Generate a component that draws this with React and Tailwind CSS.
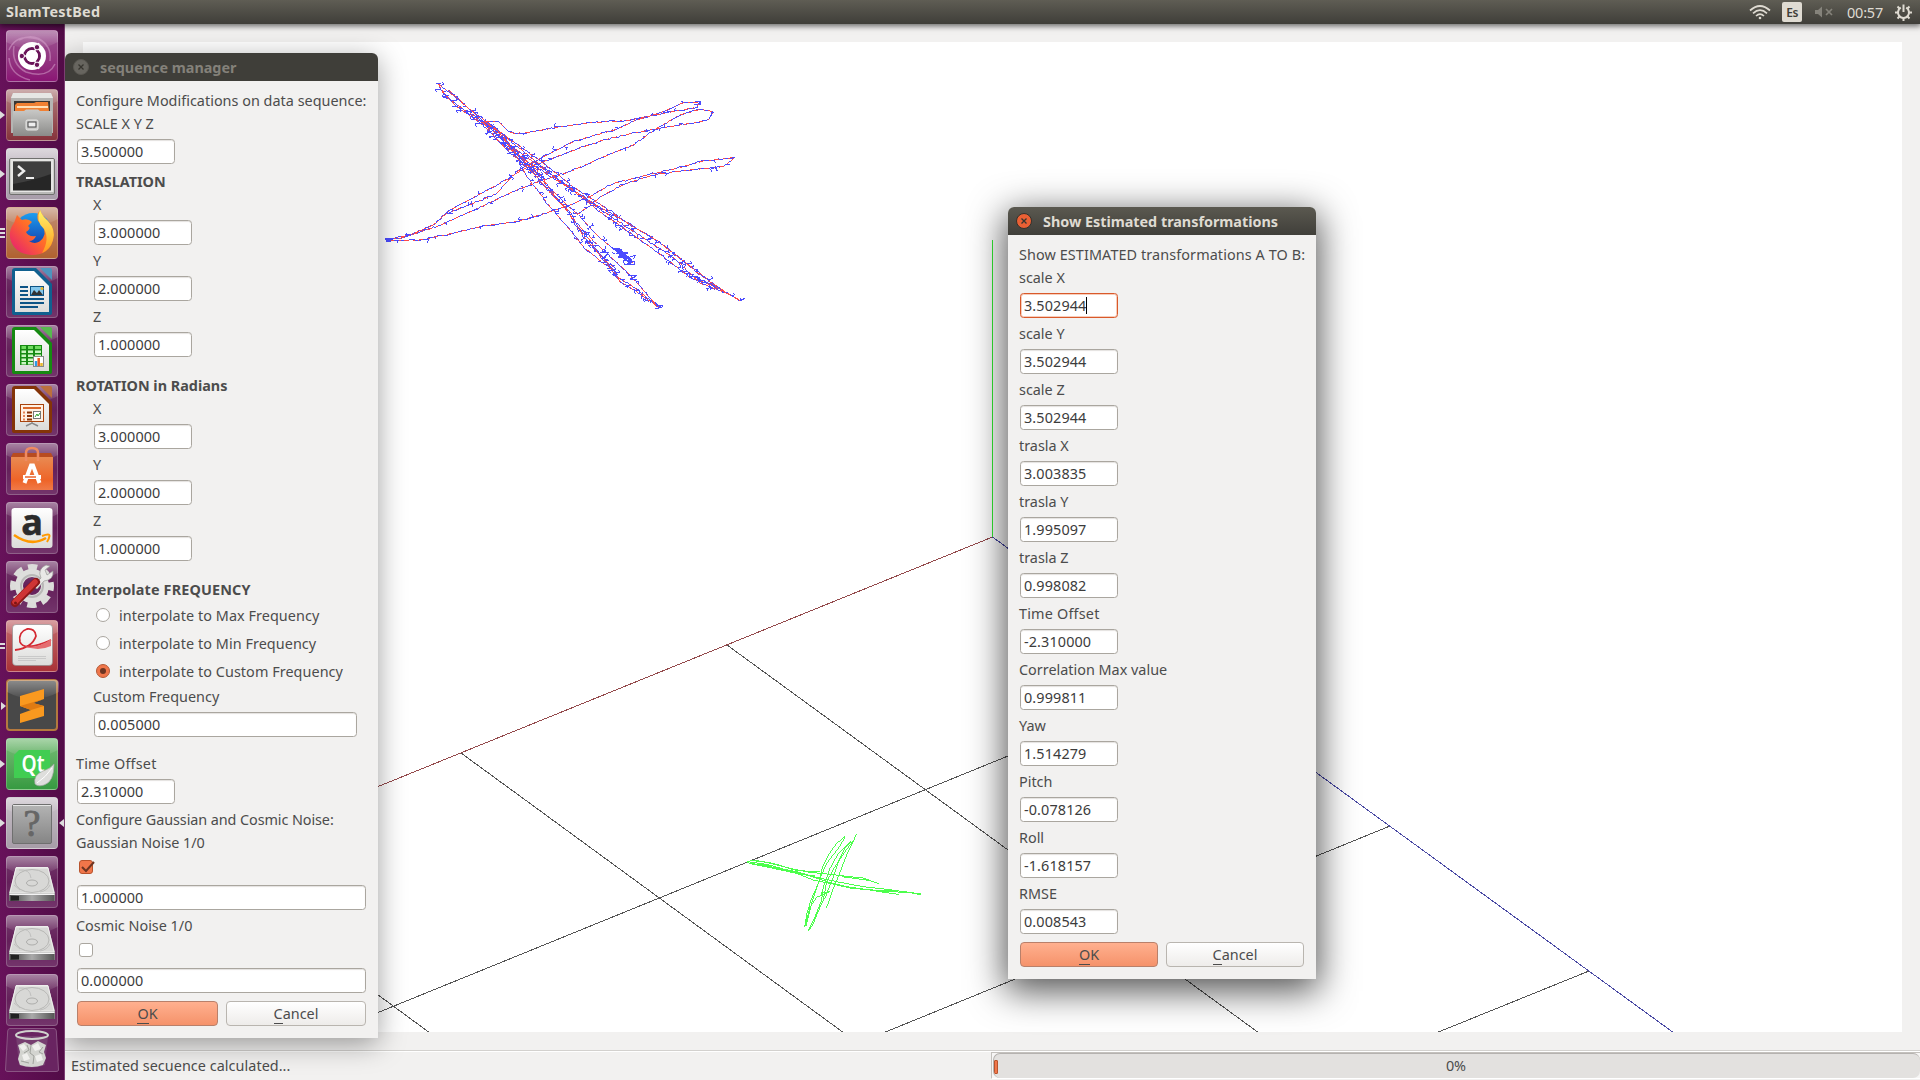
import React from "react";

/* ---------- trajectory helpers ---------- */

function makeRandom(seed) {
  let s = seed;
  return () => {
    s = (s * 1664525 + 1013904223) % 4294967296;
    return s / 4294967296;
  };
}

function sample(points, step) {
  const out = [];
  for (let i = 0; i < points.length - 1; i++) {
    const [x1, y1] = points[i];
    const [x2, y2] = points[i + 1];
    const n = Math.max(1, Math.round(Math.hypot(x2 - x1, y2 - y1) / step));
    for (let k = 0; k < n; k++) out.push([x1 + ((x2 - x1) * k) / n, y1 + ((y2 - y1) * k) / n]);
  }
  out.push(points[points.length - 1]);
  return out;
}

function noisyPath(points, seed, rate) {
  const rnd = makeRandom(seed);
  let d = "";
  sample(points, 9).forEach(([x, y], i) => {
    const jx = x + (rnd() - 0.5) * 5;
    const jy = y + (rnd() - 0.5) * 4;
    d += (i ? "L" : "M") + jx.toFixed(1) + " " + jy.toFixed(1);
    if (rnd() < rate) {
      const sx = (rnd() < 0.5 && x > 90 ? -1 : 1) * (5 + rnd() * 11);
      const sy = (rnd() - 0.5) * 20;
      d += `l${sx.toFixed(1)} ${(sy * 0.2).toFixed(1)}l${(-sx * 0.3).toFixed(1)} ${sy.toFixed(1)}M${jx.toFixed(1)} ${jy.toFixed(1)}`;
    }
  });
  return d;
}

const line = (pts) => "M" + pts.map((p) => p.join(" ")).join("L");

const TRACKS = [
  { r: 0.35, p: [[205, 42], [255, 80], [330, 145], [400, 195], [470, 252], [560, 325], [650, 388], [740, 440], [850, 505], [970, 595], [1050, 658], [1110, 692]] },
  { r: 0.35, p: [[205, 42], [222, 75], [290, 125], [360, 175], [440, 240], [510, 290], [600, 355], [690, 425], [790, 495], [880, 560], [960, 622], [1035, 650], [1105, 690]] },
  { r: 0.35, p: [[215, 60], [260, 110], [330, 158], [400, 225], [470, 272], [545, 322], [640, 380], [730, 445], [830, 510], [920, 570], [990, 640], [1060, 665]] },
  { r: 0.15, p: [[235, 60], [300, 118], [355, 160], [430, 215], [520, 280], [610, 350], [700, 410], [790, 470], [860, 510], [930, 565], [990, 615], [1080, 675]] },
  { r: 0.4, p: [[340, 155], [385, 215], [430, 255], [500, 320], [550, 380], [600, 425], [640, 500], [700, 565], [740, 620], [790, 650], [840, 690], [868, 712]] },
  { r: 0.3, p: [[350, 160], [390, 190], [440, 260], [470, 320], [540, 410], [600, 480], [640, 530], [700, 580], [730, 600], [750, 635], [800, 665], [865, 712]] },
  { r: 0.3, p: [[370, 170], [420, 230], [480, 290], [530, 345], [580, 395], [630, 440], [680, 495], [740, 545], [790, 580]] },
  { r: 0.45, p: [[400, 200], [440, 245], [490, 310], [545, 370], [585, 410], [620, 470], [660, 510], [690, 560], [740, 600]] },
  { r: 0.1, p: [[460, 265], [500, 300], [560, 385], [620, 460], [700, 540], [760, 595], [810, 650], [850, 695], [870, 712]] },
  { r: 0.12, p: [[345, 155], [385, 155], [415, 185], [432, 190], [480, 187], [560, 172], [660, 158], [770, 152], [880, 130], [980, 112], [990, 98]] },
  { r: 0.12, p: [[985, 98], [940, 98], [880, 125], [800, 150], [740, 178], [660, 200], [610, 215], [540, 250], [500, 270], [440, 305], [380, 370], [310, 400], [230, 430], [190, 465], [120, 495]] },
  { r: 0.1, p: [[1030, 125], [990, 118], [930, 135], [860, 175], [790, 225], [690, 265], [600, 305], [520, 330], [440, 360], [330, 412], [200, 470], [100, 503], [50, 510]] },
  { r: 0.12, p: [[1030, 125], [1015, 150], [930, 165], [800, 187], [700, 210], [600, 245], [520, 275], [460, 298], [400, 335], [300, 388], [240, 420], [190, 465], [120, 495], [50, 510]] },
  { r: 0.1, p: [[1090, 263], [1000, 273], [910, 298], [820, 318], [730, 340], [660, 380], [600, 405], [520, 432], [440, 455], [340, 468], [230, 494], [150, 510], [50, 512]] },
  { r: 0.15, p: [[1095, 262], [1060, 290], [960, 300], [860, 312], [770, 340], [700, 375], [660, 405], [625, 432]] },
  { r: 0.9, p: [[310, 135], [340, 155], [380, 190], [430, 235]] },
  { r: 0.8, p: [[380, 195], [435, 250], [470, 285], [510, 320]] },
  { r: 0.7, p: [[930, 600], [985, 625], [1030, 645]] },
  { r: 0.6, p: [[640, 480], [665, 520], [730, 600], [745, 630]] },
];

const GREEN = [
  [[52, 125], [110, 133], [170, 150], [230, 165], [290, 185], [350, 200], [400, 207], [470, 218], [506, 223]],
  [[52, 128], [120, 140], [200, 155], [260, 172], [330, 187], [400, 200], [470, 208], [530, 216], [572, 222]],
  [[60, 121], [110, 127], [180, 145], [240, 157], [300, 163], [360, 170], [400, 174], [448, 192]],
  [[60, 131], [130, 145], [200, 160], [250, 180], [310, 192], [380, 206], [440, 211], [500, 213]],
  [[75, 121], [130, 130], [200, 152], [270, 155]],
  [[335, 170], [395, 178], [420, 182], [445, 190]],
  [[70, 126], [150, 147], [210, 163], [255, 168]],
  [[300, 190], [360, 204], [450, 213], [540, 218], [572, 224]],
  [[346, 49], [320, 70], [295, 105], [278, 140], [265, 190], [245, 235], [232, 275], [224, 320]],
  [[360, 65], [325, 100], [300, 145], [280, 200], [275, 240], [255, 290], [234, 334]],
  [[380, 42], [350, 105], [325, 170], [310, 205], [298, 240], [289, 265]],
  [[345, 52], [325, 85], [290, 130], [268, 180], [245, 250], [228, 318]],
  [[365, 62], [345, 85], [325, 125], [310, 170], [285, 235]],
  [[375, 55], [345, 95], [315, 140], [290, 185], [280, 240], [262, 280], [248, 315], [234, 334]],
  [[300, 215], [260, 232], [240, 262], [226, 318]],
  [[300, 215], [272, 218], [285, 238]],
];

function Scene() {
  return (
    <svg className="h-[990px] w-[1819px] bg-white" viewBox="83 42 1819 990" shapeRendering="crispEdges" fill="none">
      <g stroke="#555555" strokeWidth="1">
        <path d="M727 645L1259 1033M461 753L844 1033M195.500 861L430 1033" />
        <path d="M1191 681.500L340 1028M1390 826L883 1033M1589 971L1436 1033" />
      </g>
      <path d="M992.500 537L340 802" stroke="#944a4c" />
      <path d="M992.500 537L1674 1033" stroke="#4a4aa4" />
      <path d="M992.500 240V537" stroke="#33ee33" />
      <g transform="translate(370 70) scale(.33333)" strokeWidth="3">
        {TRACKS.map((t, i) => (
          <path key={i} d={noisyPath(t.p, i * 977 + 13, t.r)} stroke="#4c4cff" />
        ))}
        {TRACKS.slice(0, 15).map((t, i) => (
          <path key={i} d={line(t.p)} stroke="#ff4c4c" strokeDasharray="15 9 6 14" />
        ))}
        <path d="M730 538L752 540L745 548L768 550L752 558L775 562L764 570L785 575L774 583M742 545L780 580M748 540L785 572" stroke="#4c4cff" strokeWidth="6" />
        <path d="M725 535H750M780 560L796 556L790 566M760 570L764 585H795L792 572M745 562H765M735 552L725 547" stroke="#4c4cff" />
        <path d="M45 507H70M48 513H62M1110 692L1125 685M860 705L878 708M855 716L875 712M775 617H800L780 628H800M198 40H212M690 548H715L705 560M975 95H990V105M1028 122L1022 140M1085 262H1095M1035 290L1042 303" stroke="#4c4cff" strokeWidth="3.500" />
      </g>
      <g transform="translate(730 820) scale(.33333)" strokeWidth="3" stroke="#4cff4c">
        {GREEN.map((p, i) => (
          <path key={i} d={line(p)} />
        ))}
      </g>
    </svg>
  );
}

/* ---------- launcher ---------- */

function Tile({ tone, children, left, right }) {
  return (
    <div className={`relative h-[52px] w-[52px] shrink-0 rounded-[4px] border border-white/20 ${tone}`}>
      <svg className="absolute -top-px -left-px h-[52px] w-[52px] overflow-visible" viewBox="0 0 52 52" fill="none">
        <path d="M4 0H48Q52 0 52 4V12Q26 26 0 12V4Q0 0 4 0Z" fill="url(#gloss)" />
        {children}
      </svg>
      {left === 1 && <span className="absolute top-[21px] -left-[7px] h-0 w-0 border-y-[4px] border-l-[5px] border-y-transparent border-l-[#dddddd]" />}
      {left > 1 && (
        <span className="absolute top-[19px] -left-[7px] flex h-[12px] w-[5px] flex-col justify-center gap-[2px]">
          {Array.from({ length: left }, (_, i) => (
            <i key={i} className="block h-[2px] w-full bg-[#dddddd]" />
          ))}
        </span>
      )}
      {right && <span className="absolute top-[21px] -right-[7px] h-0 w-0 border-y-[4px] border-r-[5px] border-y-transparent border-r-[#dddddd]" />}
    </div>
  );
}

function DocIcon({ color, fold, children }) {
  return (
    <g>
      <path d="M9 2H30L46 18V47Q46 49 44 49H8Q6 49 6 47V5Q6 2 9 2Z" fill={color} />
      <path d="M34 2H44Q46 2 46 4V14Z" fill={fold} />
      <path d="M9 5H28L43 20V46H9Z" fill="url(#paper)" />
      {children}
    </g>
  );
}

function DriveIcon() {
  return (
    <g>
      <path d="M10 11H42L49 37V45H3V37Z" fill="url(#drive)" />
      <path d="M10 12H42L48 37H4Z" fill="#d8d8d6" stroke="#efefed" strokeWidth="1" />
      <ellipse cx="26" cy="25" rx="17" ry="11.500" stroke="#b3b3b1" strokeWidth=".9" />
      <path d="M13 14Q24 13 25 22M8 29L14 34M44 29Q41 35 34 36" stroke="#b9b9b7" strokeWidth=".8" />
      <ellipse cx="26" cy="27" rx="5.500" ry="3" stroke="#a8a8a6" strokeWidth=".9" />
      <path d="M3.500 38.500H48.500V45H3.500Z" fill="url(#driveFront)" />
      <path d="M5 40H13V44.500H5Z" fill="#222" />
      <path d="M3.500 38.500H48.500" stroke="#f4f4f4" />
    </g>
  );
}

function Launcher() {
  const clear = "bg-linear-to-b from-[#743a6c] via-[#64205a] to-[#73346b]";
  return (
    <nav className="z-20 flex h-[1056px] w-[65px] shrink-0 flex-col gap-[7px] border-r border-[#7d3f73] bg-linear-to-r from-[#67125a] to-[#520c47] pt-[6px] pl-[6px]">
      <Tile tone="bg-linear-to-b from-[#9c5391] to-[#8a1574]">
        <path d="M3 20Q10 3 32 9Q46 15 44 31M49 34Q42 49 20 42Q5 34 8 16M24 50Q4 45 3 28M13 10Q28 2 40 14" stroke="#d9a8d0" strokeOpacity=".5" strokeWidth="1.500" />
        <circle cx="26" cy="26" r="14" fill="#fff" />
        <circle cx="26" cy="26" r="7.500" stroke="#6a1459" strokeWidth="3" />
        <path d="M26 26L33 13M26 26L33 39M26 26H12" stroke="#fff" strokeWidth="1.500" />
        <circle cx="26" cy="26" r="6" fill="#fff" />
        <g fill="#6a1459" stroke="#fff" strokeWidth="1">
          <circle cx="15.800" cy="26" r="2.700" />
          <circle cx="31" cy="17.200" r="2.700" />
          <circle cx="31" cy="34.800" r="2.700" />
        </g>
      </Tile>
      <Tile tone="bg-linear-to-b from-[#b07e7e] to-[#86333c]" left={1}>
        <path d="M7 4H45L47 9V44H5V9Z" fill="#b5b5b3" />
        <path d="M7 4H45L47 9H5Z" fill="#e6e6e4" />
        <path d="M8 12H44V22H8Z" fill="#3b3734" />
        <path d="M9 16L11 14H28L30 13H42L43 22H9Z" fill="#f08033" />
        <path d="M11 17H42V19H11Z" fill="#ffe0b8" />
        <path d="M7 22H18L20 20.500H32L34 22H46V47H7Z" fill="url(#cabinet)" />
        <rect x="20" y="31" width="12" height="10" rx="1.500" fill="#c9c9c7" stroke="#e7e7e5" />
        <rect x="22" y="33" width="8" height="5" fill="#eee" stroke="#444" />
      </Tile>
      <Tile tone="bg-linear-to-b from-[#c9c1c9] to-[#a89daa]" left={1}>
        <rect x="3.500" y="10.500" width="45" height="36" rx="1.500" fill="#b9b9b7" stroke="#70706e" />
        <rect x="4.500" y="11" width="43" height="33" fill="#e6e6e4" />
        <rect x="7" y="13.500" width="38" height="29" fill="#262626" />
        <path d="M7 13.500H45V26Q26 33 7 36Z" fill="#555" fillOpacity=".5" />
        <path d="M12 18L18 23L12 28" stroke="#eee" strokeWidth="2.400" />
        <path d="M20 30H28" stroke="#eee" strokeWidth="2" />
      </Tile>
      <Tile tone="bg-linear-to-b from-[#c18f75] to-[#b0612f]" left={3}>
        <circle cx="27" cy="25" r="19" fill="url(#globe)" />
        <path d="M8 16L11 8L16 13Q22 11 26 15L22 19Q26 21 20 25Q22 30 30 29Q28 34 23 34Q31 39 37 31Q42 22 32 14Q30 7 34 3Q36 9 42 14Q50 23 47 33Q43 48 26 48Q8 47 4 31Q3 22 8 16Z" fill="url(#fox)" />
        <path d="M34 3Q36 9 42 14Q50 23 47 33Q44 43 36 46Q44 32 38 22Q29 14 34 3Z" fill="url(#foxTail)" />
      </Tile>
      <Tile tone={clear}>
        <DocIcon color="#10608f" fold="#4f94bd">
          <path d="M14 21H22M14 25H22M14 29H22M14 33H38M14 37H38M14 41H32" stroke="#0d5486" strokeWidth="2" />
          <rect x="24.500" y="20.500" width="13" height="9" fill="#83c7ec" stroke="#0d5486" />
          <path d="M25 29L28 24L31 27L33 24L37 29Z" fill="#333" />
          <circle cx="36" cy="22.500" r="1.500" fill="#e9b82c" />
        </DocIcon>
      </Tile>
      <Tile tone={clear}>
        <DocIcon color="#168a12" fold="#57b84f">
          <rect x="14" y="20" width="22" height="20" fill="#168a12" />
          <path d="M15.500 22.500H20M22 22.500H27M29 22.500H35" stroke="#6fdd5f" strokeWidth="3" />
          <path d="M15.500 26.700H20M22 26.700H27M29 26.700H35M15.500 30.700H20M22 30.700H27M29 30.700H35M15.500 34.700H20M22 34.700H27M15.500 38.300H20M22 38.300H27" stroke="#c9f5c0" strokeWidth="2.600" />
          <rect x="27.500" y="31.500" width="10" height="10" fill="#fff" stroke="#888" />
          <path d="M30 41V36" stroke="#2d9be8" strokeWidth="2.500" />
          <path d="M32.700 41V33" stroke="#ea5a1e" strokeWidth="2.500" />
          <path d="M35.500 41V38" stroke="#e9b82c" strokeWidth="2.500" />
        </DocIcon>
      </Tile>
      <Tile tone={clear}>
        <DocIcon color="#843408" fold="#bb6f3d">
          <rect x="14.500" y="20.500" width="23" height="17" fill="#fff0e2" stroke="#a8430c" />
          <path d="M17 24H35" stroke="#d9672a" strokeWidth="2" />
          <path d="M17 28.500H19M17 32H19M17 35.500H19" stroke="#e38354" strokeWidth="2" />
          <path d="M21 28.500H26M21 32H26M21 35.500H26" stroke="#8a3306" strokeWidth="2" />
          <rect x="27.500" y="27.500" width="7" height="7" fill="#fff" stroke="#777" />
          <path d="M29 33L31 30L32 32L34 29" stroke="#2da02d" />
          <path d="M26 38V40M20 42L26 39L32 42" stroke="#888" strokeWidth="1.500" />
        </DocIcon>
      </Tile>
      <Tile tone={clear}>
        <path d="M5 14L7 10H45L47 14Z" fill="#b84c20" />
        <path d="M5 14H47V47H5Z" fill="url(#bag)" />
        <path d="M20 18V10Q20 5 26 5Q32 5 32 10V18" stroke="#ee8a62" strokeWidth="2.500" />
        <path d="M18.500 40L25 22.500H27L33.500 40" stroke="#fff" strokeWidth="4" />
        <path d="M17 34H35" stroke="#fff" strokeWidth="4" />
        <path d="M19 34H30" stroke="#e8642e" strokeWidth="1.500" />
      </Tile>
      <Tile tone={clear}>
        <rect x="5.500" y="6" width="41" height="40" rx="3" fill="url(#paper)" />
        <text x="26" y="33" textAnchor="middle" fontFamily="Open Sans" fontWeight="700" fontSize="36" fill="#2b2b2b" stroke="#2b2b2b" strokeWidth=".6">a</text>
        <path d="M8 33Q25 45 40 36" stroke="#f90" strokeWidth="2.500" />
        <path d="M36 34Q44 31 43.500 34Q43 37 41 40" stroke="#f90" strokeWidth="2" />
      </Tile>
      <Tile tone={clear}>
        <circle cx="26" cy="25" r="18.500" stroke="#dcdcda" strokeWidth="7" strokeDasharray="9 5.530" strokeDashoffset="4.500" />
        <circle cx="26" cy="25" r="13" stroke="#dededc" strokeWidth="8" />
        <circle cx="26" cy="25" r="11" stroke="#b9b9b7" strokeWidth="2" />
        <path d="M27 25L35 17Q31 8 40 4L44 5L39 9L41 14L47 10Q48 19 38 20L31 28Z" fill="#e9e9e7" stroke="#9a9a98" strokeWidth=".7" />
        <path d="M9 42L30 21" stroke="#8c1717" strokeWidth="8" strokeLinecap="round" />
        <path d="M9 41L29 21" stroke="#cf3434" strokeWidth="5.500" strokeLinecap="round" />
        <circle cx="9.500" cy="42" r="1.500" fill="#7a1414" />
      </Tile>
      <Tile tone="bg-linear-to-b from-[#c2696d] to-[#a93237]" left={2}>
        <rect x="6.500" y="4.500" width="40" height="41" rx="3.500" fill="url(#paper)" stroke="#888" strokeWidth=".6" />
        <path d="M9 30Q26 28 30 16Q29 8 21 9Q12 12 14 22Q18 32 45 20" stroke="#d42a33" strokeWidth="1.800" />
        <path d="M18 26Q32 29 45 19V26Q32 32 18 26Z" fill="#e56d70" />
        <path d="M12 36.500H40M12 38.500H40M12 40.500H30" stroke="#c9c9c9" />
      </Tile>
      <Tile tone="bg-[#484848] border-2! border-[#b4793f]!" left={1}>
        <path d="M13 16L37 9V19L26 23L37 26V36L13 43V34L24 30L13 26Z" fill="#f9991f" />
        <path d="M13 26L37 19L26 23L37 26L24 30Z" fill="#e07b12" />
      </Tile>
      <Tile tone="bg-linear-to-b from-[#77bc77] to-[#369a41]" left={1}>
        <path d="M13 12H44V40H8V17Z" fill="#41cd52" />
        <text x="27" y="33.500" textAnchor="middle" fontFamily="Noto Sans" fontWeight="600" fontSize="23" fill="#fff" textLength="23" lengthAdjust="spacingAndGlyphs">Qt</text>
        <path d="M48 26Q48 44 38 47Q32 49 29 46Q27 37 37 33Q44 31 48 26Z" fill="#dededc" stroke="#a8a8a6" strokeWidth=".7" />
        <path d="M31 45Q40 39 46 30" stroke="#fff" />
      </Tile>
      <Tile tone="bg-linear-to-b from-[#c9c1c9] to-[#a79da8]" left={1} right>
        <rect x="6.500" y="7.500" width="39" height="39" rx="1.500" fill="url(#unknown)" stroke="#6f6f6f" />
        <path d="M7 8.500H45" stroke="#e5e5e5" />
        <text x="26" y="38.500" textAnchor="middle" fontFamily="Liberation Serif" fontSize="38" fill="#666" stroke="#666" strokeWidth=".9">?</text>
      </Tile>
      <Tile tone={clear}><DriveIcon /></Tile>
      <Tile tone={clear}><DriveIcon /></Tile>
      <Tile tone={clear}><DriveIcon /></Tile>
      <svg className="-mt-[5px] h-[44px] w-[54px] shrink-0 -translate-x-px" viewBox="0 0 54 44" fill="none">
        <path d="M5 .5H49Q51 .5 51.300 3L53.500 42Q53.500 43.500 51 43.500H3Q.5 43.500 .5 42L2.700 3Q3 .5 5 .5Z" fill="#692461" stroke="#8a5583" />
        <path d="M11 8H43L40 37Q27 42 14 37Z" fill="#8f718b" fillOpacity=".35" />
        <path d="M13 17L20 14L26 17L33 13L41 17L39 24L41 30L38 37Q27 41 15 37L13 31L15 24Z" fill="#d3d4d0" />
        <path d="M14 18L19 16L22 20L18 23ZM27 18L33 15L36 21L30 23ZM17 27L22 25L25 31L19 33ZM30 28L36 26L38 32L32 34Z" fill="#f0f0ee" />
        <path d="M22 17L24 22L19 25M26 17L25 25L29 28L28 36M38 19L34 24L38 26M16 33L24 35" stroke="#9fa19c" strokeWidth="1" />
        <ellipse cx="27" cy="7" rx="16" ry="4" stroke="#d0d2ce" strokeWidth="2" />
      </svg>
    </nav>
  );
}

/* ---------- widgets ---------- */

function Label({ children, className = "" }) {
  return <div className={`h-[17px] shrink-0 leading-[17px] whitespace-nowrap ${className}`}>{children}</div>;
}

function Field({ value, width = "w-[98px]", focused }) {
  return (
    <div className="shrink-0 py-px pl-px">
      <div
        className={`flex h-[25px] items-center rounded-[3.5px] border bg-white pl-[3px] tracking-[0.12px] text-[#3c3c3c] ${width} ${
          focused ? "border-[#d9592a] shadow-[inset_0_0_0_1px_#f7cdbb]" : "border-[#aaa69f] shadow-[inset_0_1px_1px_#e4e2df]"
        }`}
      >
        {value}
        {focused && <i className="block h-[17px] w-px bg-black" />}
      </div>
    </div>
  );
}

function Button({ primary, first, rest, width }) {
  return (
    <div
      className={`flex h-[25px] items-center justify-center rounded-[4px] border ${width} ${
        primary
          ? "border-[#b9806a] bg-linear-to-b from-[#ffb08f] to-[#f5926a]"
          : "border-[#b9b5af] bg-linear-to-b from-white to-[#eeecea]"
      }`}
    >
      <span className="inline-block h-[21px] border-b border-[#4c4c4c] leading-[21px]">{first}</span>
      <span className="inline-block h-[21px] leading-[21px]">{rest}</span>
    </div>
  );
}

function Radio({ checked, children }) {
  return (
    <div className="flex h-[22px] shrink-0 items-center gap-[9px] pl-[20px]">
      <span
        className={`flex h-[14px] w-[14px] items-center justify-center rounded-full border ${
          checked ? "border-[#b35a38] bg-[#f0764a]" : "border-[#aaa69f] bg-white"
        }`}
      >
        {checked && <i className="block h-[6px] w-[6px] rounded-full bg-[#6d3522]" />}
      </span>
      <span className="leading-[17px] tracking-[0.06px]">{children}</span>
    </div>
  );
}

function Checkbox({ checked }) {
  return (
    <div className="flex h-[21px] shrink-0 items-start pt-[3px] pl-[3px]">
      <span className={`relative h-[14px] w-[14px] rounded-[3px] border ${checked ? "border-[#b8532c] bg-[#f0764a]" : "border-[#aaa69f] bg-white"}`}>
        {checked && (
          <svg className="absolute -top-px left-0 h-[14px] w-[16px]" viewBox="0 0 16 14" fill="none">
            <path d="M2 7L6 11L14 2" stroke="#6d3522" strokeWidth="2" />
          </svg>
        )}
      </span>
    </div>
  );
}

function TitleBar({ active, children }) {
  return (
    <header
      className={`flex h-[28px] items-center rounded-t-[6px] pl-[8px] font-bold ${
        active ? "bg-linear-to-b from-[#5b5950] to-[#403f3a] text-[#dfdbd2]" : "bg-[#3f3e39] text-[#84817a]"
      }`}
    >
      <svg className="h-[16px] w-[16px]" viewBox="0 0 16 16">
        <circle cx="8" cy="8" r="7.500" fill={active ? "#ea6034" : "#67655f"} stroke={active ? "#33312c" : "#5a5852"} />
        <path d="M5.500 5.500L10.500 10.500M10.500 5.500L5.500 10.500" stroke="#37352f" strokeWidth="1.300" />
      </svg>
      <h1 className="pt-[2px] pl-[11px] tracking-[-0.02px]">{children}</h1>
    </header>
  );
}

function Axes({ values }) {
  return (
    <div className="flex flex-col gap-[6px] pl-[17px]">
      {["X", "Y", "Z"].map((axis, i) => (
        <React.Fragment key={axis}>
          <Label>{axis}</Label>
          <Field value={values[i]} />
        </React.Fragment>
      ))}
    </div>
  );
}

function SequenceManager() {
  return (
    <section className="absolute top-[53px] left-[65px] w-[313px] rounded-t-[6px] shadow-[0_6px_28px_rgba(0,0,0,0.38)]">
      <TitleBar>sequence manager</TitleBar>
      <div className="flex h-[957px] flex-col gap-[6px] bg-[#f2f1f0] pt-[11px] pl-[11px]">
        <Label className="tracking-[0.02px]">Configure Modifications on data sequence:</Label>
        <Label>SCALE X Y Z</Label>
        <Field value="3.500000" />
        <Label className="mt-[2px] font-bold">TRASLATION</Label>
        <Axes values={["3.000000", "2.000000", "1.000000"]} />
        <Label className="mt-[13px] font-bold">ROTATION in Radians</Label>
        <Axes values={["3.000000", "2.000000", "1.000000"]} />
        <Label className="mt-[13px] font-bold tracking-[0.15px]">Interpolate FREQUENCY</Label>
        <Radio>interpolate to Max Frequency</Radio>
        <Radio>interpolate to Min Frequency</Radio>
        <Radio checked>interpolate to Custom Frequency</Radio>
        <div className="flex flex-col gap-[6px] pl-[17px]">
          <Label>Custom Frequency</Label>
          <Field value="0.005000" width="w-[263px]" />
        </div>
        <Label className="mt-[11px] tracking-[0.2px]">Time Offset</Label>
        <Field value="2.310000" />
        <Label className="tracking-[-0.08px]">Configure Gaussian and Cosmic Noise:</Label>
        <Label className="tracking-[-0.05px]">Gaussian Noise 1/0</Label>
        <Checkbox checked />
        <Field value="1.000000" width="w-[289px]" />
        <Label>Cosmic Noise 1/0</Label>
        <Checkbox />
        <Field value="0.000000" width="w-[289px]" />
        <div className="flex gap-[8px] pt-px pl-px">
          <Button primary first="O" rest="K" width="w-[141px]" />
          <Button first="C" rest="ancel" width="w-[140px]" />
        </div>
      </div>
    </section>
  );
}

const ESTIMATES = [
  ["scale X", "3.502944"],
  ["scale Y", "3.502944"],
  ["scale Z", "3.502944"],
  ["trasla X", "3.003835"],
  ["trasla Y", "1.995097"],
  ["trasla Z", "0.998082"],
  ["Time Offset", "-2.310000"],
  ["Correlation Max value", "0.999811"],
  ["Yaw", "1.514279"],
  ["Pitch", "-0.078126"],
  ["Roll", "-1.618157"],
  ["RMSE", "0.008543"],
];

function EstimatesDialog() {
  return (
    <section className="absolute top-[207px] left-[1008px] w-[308px] rounded-t-[6px] shadow-[0_9px_36px_3px_rgba(0,0,0,0.68)]">
      <TitleBar active>Show Estimated transformations</TitleBar>
      <div className="flex h-[744px] flex-col gap-[6px] bg-[#f2f1f0] pt-[11px] pl-[11px]">
        <Label className="tracking-[0.1px]">Show ESTIMATED transformations A TO B:</Label>
        {ESTIMATES.map(([name, value], i) => (
          <React.Fragment key={name}>
            <Label className={name === "Time Offset" ? "tracking-[0.2px]" : ""}>{name}</Label>
            <Field value={value} focused={i === 0} />
          </React.Fragment>
        ))}
        <div className="flex gap-[8px] pt-px pl-px">
          <Button primary first="O" rest="K" width="w-[138px]" />
          <Button first="C" rest="ancel" width="w-[138px]" />
        </div>
      </div>
    </section>
  );
}

function TopPanel() {
  return (
    <header className="relative z-30 flex h-[24px] items-center justify-between bg-linear-to-b from-[#5f5d54] to-[#3f3e39] pr-[8px] pl-[6px] text-[#dfdbd2] shadow-[0_1px_6px_1px_rgba(0,0,0,0.6)]">
      <span className="font-bold tracking-[0.25px]">SlamTestBed</span>
      <div className="flex h-full items-center">
        <svg className="h-[16px] w-[22px]" viewBox="0 0 22 16" fill="none" stroke="#dfdbd2" strokeWidth="1.700">
          <path d="M1 6.500Q11 -2.500 21 6.500M4 9.300Q11 3 18 9.300M7 12Q11 8.300 15 12" />
          <circle cx="11" cy="14" r="1.300" fill="#dfdbd2" stroke="none" />
        </svg>
        <span className="ml-[11px] flex h-[20px] w-[20px] items-center justify-center rounded-[2px] bg-[#dfdbd2] pt-px text-[12px] font-semibold tracking-[-0.5px] text-[#3f3e39]">Es</span>
        <svg className="ml-[13px] h-[12px] w-[18px]" viewBox="0 0 18 12" fill="#85837b">
          <path d="M0 4H3L7 .5V11.500L3 8H0Z" />
          <path d="M11 3L17 9M17 3L11 9" stroke="#85837b" strokeWidth="1.700" />
        </svg>
        <span className="ml-[14px] w-[37px] text-[14.5px] leading-none tracking-[-0.2px]">00:57</span>
        <svg className="ml-[11px] h-[17px] w-[17px]" viewBox="0 0 17 17" fill="none" stroke="#dfdbd2">
          <path d="M5.800 3.700A5.500 5.500 0 1 0 11.200 3.700" strokeWidth="2" />
          <path d="M8.500 .5V8" strokeWidth="2" />
          <path d="M0 8.500H3M14 8.500H17M8.500 14V17M2.500 2.500L4.500 4.500M14.500 2.500L12.500 4.500M2.500 14.500L4.500 12.500M14.500 14.500L12.500 12.500" strokeWidth="2" />
        </svg>
      </div>
    </header>
  );
}

function StatusBar() {
  return (
    <footer className="flex h-[30px] w-full border-t border-[#d3d1ce] shadow-[inset_0_1px_0_#fff]">
      <div className="flex w-[926px] items-center pl-[6px] tracking-[0.05px]">Estimated secuence calculated...</div>
      <div className="mt-px flex h-[27px] flex-1 border border-r-0 border-[#c4c1bd] border-b-white bg-[#f7f6f5] pl-px">
        <div className="relative flex h-[25px] flex-1 items-center overflow-hidden rounded-[7px] border-t border-l border-[#b5b2af] bg-[#e3e1df]">
          <i className="absolute top-[6px] left-0 block h-[14px] w-[4px] rounded-[1px] border border-[#b9542c] bg-[#f0764a]" />
          <span className="w-full pr-[2px] text-center">0%</span>
        </div>
      </div>
    </footer>
  );
}

export default function App() {
  return (
    <div className="relative h-[1080px] w-[1920px] overflow-hidden bg-[#f2f1f0] font-['Noto_Sans','Open_Sans',sans-serif] text-[14.4px] text-[#4c4c4c]">
      <svg className="absolute h-0 w-0">
        <defs>
          <linearGradient id="gloss" x2="0" y2="1"><stop stopColor="#fff" stopOpacity=".38" /><stop offset="1" stopColor="#fff" stopOpacity=".02" /></linearGradient>
          <linearGradient id="paper" x2="0" y2="1"><stop stopColor="#fff" /><stop offset="1" stopColor="#dcdcda" /></linearGradient>
          <linearGradient id="drive" x2="0" y2="1"><stop stopColor="#eee" /><stop offset="1" stopColor="#999" /></linearGradient>
          <linearGradient id="driveFront"><stop stopColor="#444" /><stop offset=".5" stopColor="#aaa" /><stop offset="1" stopColor="#555" /></linearGradient>
          <linearGradient id="cabinet" x2="0" y2="1"><stop stopColor="#c9c9c7" /><stop offset="1" stopColor="#8b8b89" /></linearGradient>
          <linearGradient id="bag" x2="0" y2="1"><stop stopColor="#e98a52" /><stop offset=".7" stopColor="#ee6428" /><stop offset="1" stopColor="#f07a48" /></linearGradient>
          <linearGradient id="unknown" x2="0" y2="1"><stop stopColor="#b4b4b4" /><stop offset="1" stopColor="#858585" /></linearGradient>
          <linearGradient id="globe" x2="0" y2="1"><stop stopColor="#1c9df0" /><stop offset="1" stopColor="#1230a0" /></linearGradient>
          <linearGradient id="fox" x1="1" x2="0" y2="1"><stop stopColor="#ffb31c" /><stop offset=".5" stopColor="#ff6a2a" /><stop offset="1" stopColor="#e3157a" /></linearGradient>
          <linearGradient id="foxTail" x2="0" y2="1"><stop stopColor="#fff36a" /><stop offset="1" stopColor="#ff9a1c" /></linearGradient>
        </defs>
      </svg>
      <TopPanel />
      <div className="flex">
        <Launcher />
        <main className="flex w-[1855px] flex-col justify-between pt-[18px]">
          <div className="pl-[18px]">
            <Scene />
          </div>
          <StatusBar />
        </main>
      </div>
      <SequenceManager />
      <EstimatesDialog />
    </div>
  );
}
